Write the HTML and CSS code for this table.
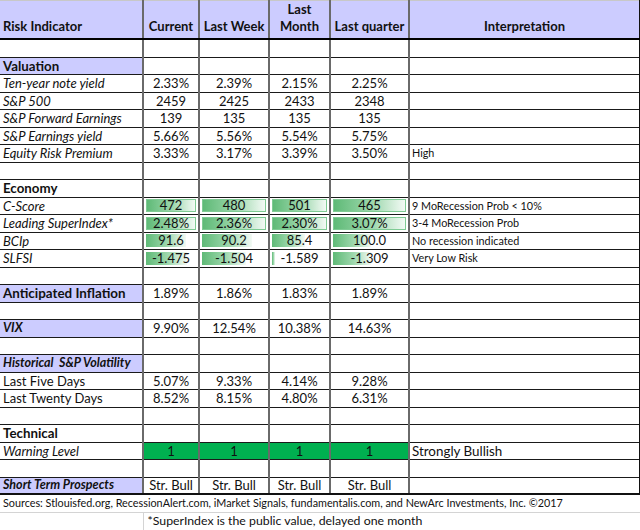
FILE: index.html
```html
<!DOCTYPE html>
<html>
<head>
<meta charset="utf-8">
<link rel="stylesheet" href="styles.css">
</head>
<body>
<table class="sheet">
  <colgroup>
    <col class="c1"><col class="c2"><col class="c3"><col class="c4"><col class="c5"><col class="c6">
  </colgroup>
  <thead>
    <tr class="head">
      <th class="lbl">Risk Indicator</th>
      <th>Current</th>
      <th>Last Week</th>
      <th>Last<br>Month</th>
      <th>Last quarter</th>
      <th class="interp">Interpretation</th>
    </tr>
  </thead>
  <tbody>
    <tr><td></td><td></td><td></td><td></td><td></td><td></td></tr>
    <tr><td class="sec hl">Valuation</td><td></td><td></td><td></td><td></td><td></td></tr>
    <tr><td class="it">Ten-year note yield</td><td class="n">2.33%</td><td class="n">2.39%</td><td class="n">2.15%</td><td class="n">2.25%</td><td></td></tr>
    <tr><td class="it">S&amp;P 500</td><td class="n">2459</td><td class="n">2425</td><td class="n">2433</td><td class="n">2348</td><td></td></tr>
    <tr><td class="it">S&amp;P Forward Earnings</td><td class="n">139</td><td class="n">135</td><td class="n">135</td><td class="n">135</td><td></td></tr>
    <tr><td class="it">S&amp;P Earnings yield</td><td class="n">5.66%</td><td class="n">5.56%</td><td class="n">5.54%</td><td class="n">5.75%</td><td></td></tr>
    <tr><td class="it">Equity Risk Premium</td><td class="n">3.33%</td><td class="n">3.17%</td><td class="n">3.39%</td><td class="n">3.50%</td><td class="note">High</td></tr>
    <tr><td></td><td></td><td></td><td></td><td></td><td></td></tr>
    <tr><td class="sec">Economy</td><td></td><td></td><td></td><td></td><td></td></tr>
    <tr><td class="it">C-Score</td>
      <td class="db"><div class="dbw"><span class="bar edge" style="--w:100%"></span><span class="val">472</span></div></td>
      <td class="db"><div class="dbw"><span class="bar edge" style="--w:100%"></span><span class="val">480</span></div></td>
      <td class="db"><div class="dbw"><span class="bar edge" style="--w:100%"></span><span class="val">501</span></div></td>
      <td class="db"><div class="dbw"><span class="bar edge" style="--w:100%"></span><span class="val">465</span></div></td>
      <td class="note">9 MoRecession Prob &lt; 10%</td></tr>
    <tr><td class="it">Leading SuperIndex*</td>
      <td class="db"><div class="dbw"><span class="bar edge" style="--w:100%"></span><span class="val">2.48%</span></div></td>
      <td class="db"><div class="dbw"><span class="bar edge" style="--w:100%"></span><span class="val">2.36%</span></div></td>
      <td class="db"><div class="dbw"><span class="bar edge" style="--w:100%"></span><span class="val">2.30%</span></div></td>
      <td class="db"><div class="dbw"><span class="bar edge" style="--w:100%"></span><span class="val">3.07%</span></div></td>
      <td class="note">3-4 MoRecession Prob</td></tr>
    <tr><td class="it">BCIp</td>
      <td class="db"><div class="dbw"><span class="bar" style="--w:80%"></span><span class="val">91.6</span></div></td>
      <td class="db"><div class="dbw"><span class="bar" style="--w:78%"></span><span class="val">90.2</span></div></td>
      <td class="db"><div class="dbw"><span class="bar" style="--w:60%"></span><span class="val">85.4</span></div></td>
      <td class="db"><div class="dbw"><span class="bar" style="--w:52%"></span><span class="val">100.0</span></div></td>
      <td class="note">No recession indicated</td></tr>
    <tr><td class="it">SLFSI</td>
      <td class="db"><div class="dbw"><span class="bar" style="--w:82%"></span><span class="val">-1.475</span></div></td>
      <td class="db"><div class="dbw"><span class="bar" style="--w:68%"></span><span class="val">-1.504</span></div></td>
      <td class="db"><div class="dbw"><span class="bar" style="--w:6%"></span><span class="val">-1.589</span></div></td>
      <td class="db"><div class="dbw"><span class="bar" style="--w:52%"></span><span class="val">-1.309</span></div></td>
      <td class="note">Very Low Risk</td></tr>
    <tr><td></td><td></td><td></td><td></td><td></td><td></td></tr>
    <tr><td class="sec big hl">Anticipated Inflation</td><td class="n">1.89%</td><td class="n">1.86%</td><td class="n">1.83%</td><td class="n">1.89%</td><td></td></tr>
    <tr><td></td><td></td><td></td><td></td><td></td><td></td></tr>
    <tr><td class="sec it hl">VIX</td><td class="n">9.90%</td><td class="n">12.54%</td><td class="n">10.38%</td><td class="n">14.63%</td><td></td></tr>
    <tr><td></td><td></td><td></td><td></td><td></td><td></td></tr>
    <tr><td class="sec it hl">Historical&nbsp; S&amp;P Volatility</td><td></td><td></td><td></td><td></td><td></td></tr>
    <tr><td class="up">Last Five Days</td><td class="n">5.07%</td><td class="n">9.33%</td><td class="n">4.14%</td><td class="n">9.28%</td><td></td></tr>
    <tr><td class="up">Last Twenty Days</td><td class="n">8.52%</td><td class="n">8.15%</td><td class="n">4.80%</td><td class="n">6.31%</td><td></td></tr>
    <tr><td></td><td></td><td></td><td></td><td></td><td></td></tr>
    <tr><td class="sec">Technical</td><td></td><td></td><td></td><td></td><td></td></tr>
    <tr><td class="it">Warning Level</td><td class="n go">1</td><td class="n go">1</td><td class="n go">1</td><td class="n go">1</td><td class="note big-note">Strongly Bullish</td></tr>
    <tr><td></td><td></td><td></td><td></td><td></td><td></td></tr>
    <tr class="last"><td class="sec it hl">Short Term Prospects</td><td class="n">Str. Bull</td><td class="n">Str. Bull</td><td class="n">Str. Bull</td><td class="n">Str. Bull</td><td></td></tr>
  </tbody>
  <tfoot>
    <tr class="foot"><td colspan="6" class="src">Sources: Stlouisfed.org, RecessionAlert.com, iMarket Signals, fundamentalis.com, and NewArc Investments, Inc. ©2017</td></tr>
    <tr class="foot"><td class="blank"></td><td colspan="5" class="star">*SuperIndex is the public value, delayed one month</td></tr>
  </tfoot>
</table>
</body>
</html>
```
FILE: styles.css
```css
html, body {
  margin: 0;
  padding: 0;
  background: #ffffff;
}

body {
  font-family: Lato, "Liberation Sans", sans-serif;
  color: #111;
}

.sheet {
  border-collapse: collapse;
  table-layout: fixed;
  width: 640px;
}

.c1 { width: 143px; }
.c2 { width: 56px; }
.c3 { width: 70px; }
.c4 { width: 61px; }
.c5 { width: 79px; }
.c6 { width: 231px; }

.head { height: 37px; }

.head th {
  background: #ccccff;
  border-top: 1px solid #c8c8c8;
  border-bottom: 2px solid #000;
  border-right: 2px solid #6a6a6a;
  padding: 0 2px 3px;
  font-size: 13px;
  font-weight: 700;
  line-height: 17px;
  vertical-align: bottom;
  text-align: center;
  white-space: nowrap;
}

.head th.lbl {
  text-align: left;
  padding-left: 3px;
}

.head th.interp {
  border-right: 2px solid #111;
}

tbody tr:nth-child(odd) { height: 18px; }
tbody tr:nth-child(even) { height: 17px; }

tbody td {
  border-bottom: 1px solid #1a1a1a;
  border-right: 2px solid #6a6a6a;
  padding: 0 3px;
  font-size: 13px;
  line-height: 14px;
  white-space: nowrap;
  vertical-align: middle;
}

tbody td:last-child {
  border-right: 2px solid #111;
}

tbody tr.last td {
  border-bottom: 2px solid #111;
}

.it { font-style: italic; }

.sec {
  font-weight: 700;
  font-size: 13.3px;
}

.sec.it { font-size: 12.5px; }

.sec.big { font-size: 13.4px; }

.hl { background: #ccccff; }

.up { font-size: 13px; }

.n { text-align: center; }

.note {
  font-size: 10.8px;
  padding-left: 2px;
}

.note.big-note { font-size: 13.4px; }

.go { background: #00b050; }

td.db {
  padding: 0 2px;
}

.dbw {
  display: grid;
  height: 13px;
}

.bar {
  grid-area: 1 / 1;
  width: var(--w);
  box-sizing: border-box;
  background: linear-gradient(to right, #5fba77 0%, #9fd8ae 55%, #f3faf5 100%);
}

.bar.edge {
  border: 1px solid #7fcb94;
}

.val {
  grid-area: 1 / 1;
  text-align: center;
  line-height: 13px;
}

.foot { height: 18px; }

.foot td {
  border-bottom: 1px solid #d4d4d4;
  border-right: 1px solid #d4d4d4;
  font-size: 10.8px;
  line-height: 14px;
  white-space: nowrap;
  padding: 0 3px;
}

.foot td.star {
  padding-left: 4px;
  font-size: 12.3px;
}
```
